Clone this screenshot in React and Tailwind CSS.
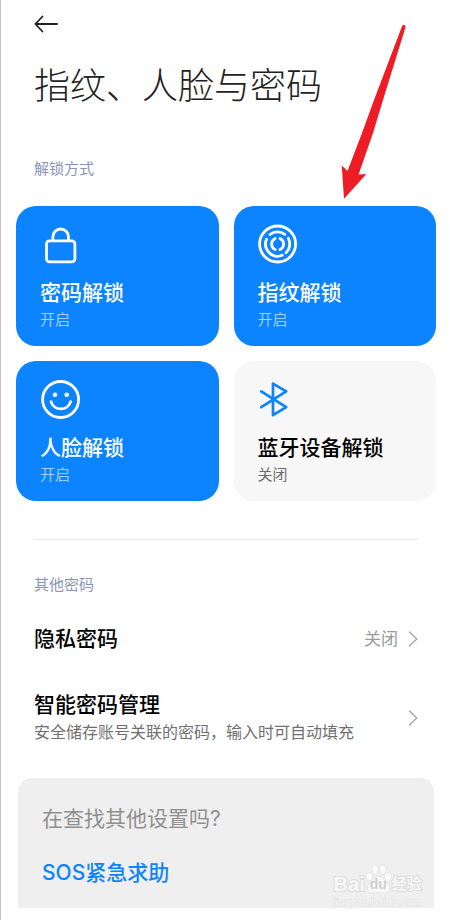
import React from 'react';

const LockIcon = () => (
  <svg viewBox="0 0 42 42" className="size-[42px]" fill="none" stroke="currentColor" strokeWidth="2.8" strokeLinecap="round">
    <rect x="6.5" y="16.8" width="28.4" height="21" rx="3" />
    <path d="M12.9 16.6v-3.8a7.8 7.8 0 0 1 15.6 0v3.8" />
  </svg>
);

const FingerprintIcon = () => (
  <svg viewBox="0 0 42 42" className="size-[42px]" fill="none" stroke="currentColor" strokeWidth="2.8" strokeLinecap="round">
    <circle cx="19.6" cy="20" r="18" />
    <path d="M12 10.5A12.2 12.2 0 0 1 26.8 10.3" />
    <path d="M8.5 15.2A12.2 12.2 0 0 0 24.2 31.3" />
    <path d="M30.4 14.3A12.2 12.2 0 0 1 28 28.8" />
    <path d="M17.2 14.5A6 6 0 0 0 17.2 25.5" />
    <path d="M22 14.5A6 6 0 0 1 22 25.5" />
  </svg>
);

const FaceIcon = () => (
  <svg viewBox="0 0 42 42" className="size-[42px]" fill="none" stroke="currentColor" strokeWidth="2.8" strokeLinecap="round">
    <circle cx="20.6" cy="20.5" r="18" />
    <circle cx="15" cy="15.8" r="2.3" fill="currentColor" stroke="none" />
    <circle cx="26.7" cy="15.8" r="2.3" fill="currentColor" stroke="none" />
    <path d="M11 22.6a10.2 10.2 0 0 0 19.6 0" />
  </svg>
);

const BluetoothIcon = () => (
  <svg viewBox="0 0 42 42" className="size-[42px]" fill="none" stroke="currentColor" strokeWidth="2.7" strokeLinecap="round" strokeLinejoin="round">
    <path d="M3.2 12.4 28.2 28.2 15 36.2V4.6L28.2 12.4 3.2 28.2" />
  </svg>
);

const Chevron = () => (
  <svg viewBox="0 0 10 16" className="h-4 w-[10px]" fill="none" stroke="#a3a3a3" strokeWidth="1.3" strokeLinecap="round" strokeLinejoin="round">
    <path d="M1.5 1 8.8 8 1.5 15" />
  </svg>
);

const methods = [
  { title: '密码解锁', on: true, Icon: LockIcon },
  { title: '指纹解锁', on: true, Icon: FingerprintIcon },
  { title: '人脸解锁', on: true, Icon: FaceIcon },
  { title: '蓝牙设备解锁', on: false, Icon: BluetoothIcon }
];

const MethodCard = ({ title, on, Icon }) => (
  <button
    type="button"
    className={`flex flex-col items-start rounded-[20px] pt-[18px] pr-4 pb-[13px] pl-6 text-left ${on ? 'bg-[#0d84ff] text-white' : 'bg-[#f7f7f7] text-black'}`}
  >
    <span className={on ? 'text-white' : 'text-[#0d84ff]'}>
      <Icon />
    </span>
    <span className="mt-[13px] text-[21px] leading-7 font-medium">{title}</span>
    <span className={`text-[15px] leading-[26px] ${on ? 'text-[#9dceff]' : 'text-[#6b6b6b]'}`}>{on ? '开启' : '关闭'}</span>
  </button>
);

const Watermark = () => (
  <div className="absolute right-3 bottom-0 flex flex-col items-center font-['Liberation_Sans','Noto_Sans_CJK_SC',sans-serif]" aria-hidden="true">
    <div className="flex items-end text-[#f6f6f6] [-webkit-text-stroke:2px_#dedede] [paint-order:stroke]">
      <span className="text-[20px] leading-6 font-bold">Bai</span>
      <span className="relative flex h-8 w-[27px] items-end justify-center">
        <svg viewBox="0 0 27 30" className="absolute inset-0 h-[30px] w-[27px]" fill="#fafafa" stroke="#d8d8d8" strokeWidth="1">
          <ellipse cx="4.2" cy="12.5" rx="3" ry="4" />
          <ellipse cx="10" cy="5.8" rx="3.2" ry="4.6" />
          <ellipse cx="17.6" cy="5.8" rx="3.2" ry="4.6" />
          <ellipse cx="23" cy="13" rx="3" ry="4" />
          <path d="M13.6 12.5c3.4 0 4.6 3 6.6 5 2.4 2.2 4.8 4 4.2 7.5-.6 3-3.4 4-6 3.8-1.8-.2-3-.6-4.8-.6s-3 .4-4.8.6c-2.8.2-5.4-.8-6-3.8-.6-3.5 1.8-5.3 4.2-7.5 2-2 3.2-5 6.6-5z" />
        </svg>
        <span className="relative text-[14px] leading-6 font-bold text-[#cfcfcf] [-webkit-text-stroke:0]">du</span>
      </span>
      <span className="text-[15px] leading-6 font-bold">经验</span>
    </div>
    <span className="text-[11px] leading-3 text-[#f6f6f6] [-webkit-text-stroke:1px_#e2e2e2] [paint-order:stroke]">jingyan.baidu.com</span>
  </div>
);

const App = () => {
  return (
    <main className="relative border-l border-[#c0c3cb] bg-white pr-[14px] pb-3 pl-[15px] font-['Inter','Noto_Sans_CJK_SC',sans-serif] text-black">
      <header className="px-[18px]">
        <button type="button" aria-label="返回" className="flex h-12 items-center">
          <svg viewBox="0 0 24 18" className="h-[18px] w-6" fill="none" stroke="#222" strokeWidth="1.8" strokeLinecap="round" strokeLinejoin="round">
            <path d="M23 9H1.5M8.5 1.5 1.3 9l7.2 7.5" />
          </svg>
        </button>
        <h1 className="mt-[14px] text-[36px] leading-[48px] font-light whitespace-nowrap text-[#222]">指纹、人脸与密码</h1>
      </header>

      <section>
        <h2 className="mt-[47px] px-[18px] text-[15px] leading-6 text-[#8b93b8]">解锁方式</h2>
        <div className="mt-[25px] grid grid-cols-2 gap-[15px]">
          {methods.map(m => (
            <MethodCard key={m.title} {...m} />
          ))}
        </div>
      </section>

      <hr className="mx-[18px] mt-[38px] border-[#e8e8e8]" />

      <section className="px-[18px]">
        <h2 className="mt-[33px] text-[15px] leading-6 text-[#8b93b8]">其他密码</h2>
        <button type="button" className="mt-1 flex w-full items-center justify-between py-6 text-left">
          <span className="text-[21px] leading-7 font-medium">隐私密码</span>
          <span className="flex items-center gap-2.5 text-[17px] leading-7 text-[#9b9b9b]">
            关闭
            <Chevron />
          </span>
        </button>
        <button type="button" className="flex w-full items-center justify-between py-[14px] text-left">
          <span className="flex flex-col">
            <span className="text-[21px] leading-7 font-medium">智能密码管理</span>
            <span className="text-[16px] leading-[26px] text-[#707070]">安全储存账号关联的密码，输入时可自动填充</span>
          </span>
          <Chevron />
        </button>
      </section>

      <footer className="relative mx-0.5 mt-[19px] rounded-t-[14px] bg-[#efefef] px-6 pt-[27px] pb-[21px]">
        <p className="text-[21px] leading-7 text-[#8f8f8f]">在查找其他设置吗?</p>
        <a href="#sos" className="mt-[26px] block text-[21px] leading-7 font-medium text-[#0d84ff]">SOS紧急求助</a>
        <Watermark />
      </footer>

      {/* pointer to the fingerprint card */}
      <svg viewBox="0 0 66 176" className="pointer-events-none absolute top-6 right-[43px] h-44 w-[66px]" fill="#ee1c25">
        <path d="M61.3 1.6Q62.5.6 64.4 1.4L64.6 3 42 76 32 109 17.6 150.6 25.3 150 3 174.7.7 141.5 6.5 147 21 109 33 76Z" />
      </svg>
    </main>
  );
};

export default App;
